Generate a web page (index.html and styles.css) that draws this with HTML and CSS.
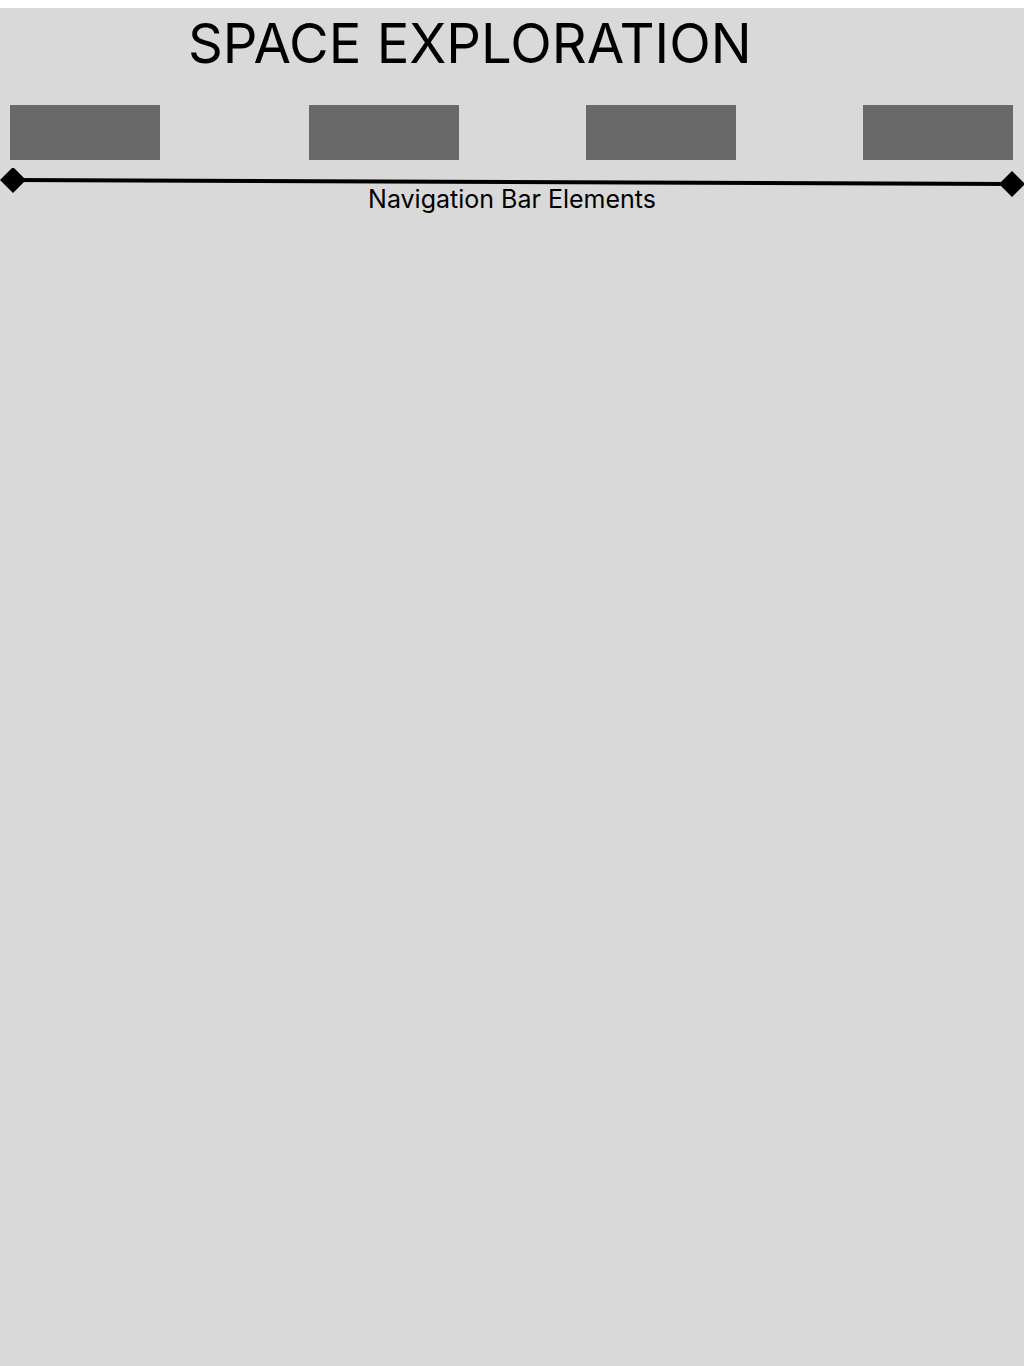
FILE: index.html
```html
<!DOCTYPE html>
<html lang="en">
<head>
    <meta charset="UTF-8">
    <meta name="viewport" content="width=device-width, initial-scale=1.0">
    <title>Space Exploration</title>
    <link rel="stylesheet" href="styles.css">
</head>
<body>

<div class="page">
    <h1 class="title">SPACE EXPLORATION</h1>

    <nav class="nav">
        <div class="nav-item"></div>
        <div class="nav-item"></div>
        <div class="nav-item"></div>
        <div class="nav-item"></div>
    </nav>

    <!-- medida del ancho de la barra -->
    <svg class="measure" width="1024" height="30" viewBox="0 0 1024 30">
        <line x1="13" y1="12" x2="1012" y2="16" stroke="#000" stroke-width="4"/>
        <polygon points="13,-1 26,12 13,25 0,12" fill="#000"/>
        <polygon points="1012,3 1025,16 1012,29 999,16" fill="#000"/>
    </svg>
    <p class="measure-label">Navigation Bar Elements</p>
</div>

</body>
</html>
```

FILE: styles.css
```css
/* Estilos básicos */
body {
    margin: 8px 0 0;
    font-family: Inter, "Noto Sans", sans-serif;
}
.page {
    background-color: #d9d9d9;
    min-height: 1358px;
    overflow: hidden;
}
.title {
    margin: 10px 0 0 188px;
    font-size: 54.3px;
    font-weight: 400;
    line-height: 50px;
    color: #000;
}
.nav {
    display: flex;
    gap: 127px;
    margin: 37px 0 0 10px;
}
.nav-item {
    width: 150px;
    height: 55px;
    background-color: #696969;
}
.nav-item:first-child {
    margin-right: 22px;
}
.measure {
    display: block;
    margin-top: 8px;
}
.measure-label {
    margin: -14px 0 0;
    text-align: center;
    font-size: 25px;
    line-height: 30px;
}
```
